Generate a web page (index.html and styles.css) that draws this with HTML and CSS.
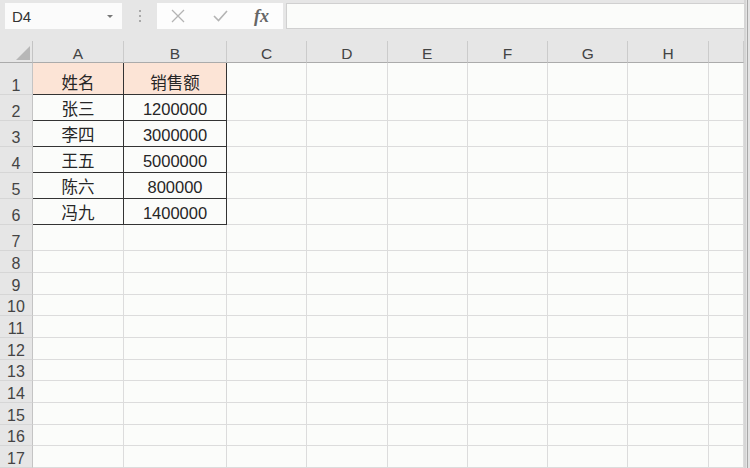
FILE: index.html
```html
<!DOCTYPE html>
<html lang="zh-CN">
<head>
    <meta charset="UTF-8">
    <meta name="viewport" content="width=device-width, initial-scale=1.0">
    <title>销售额</title>
    <link rel="stylesheet" href="styles.css">
</head>
<body>

    <div class="ecran">
        <div class="app">
            <div class="bara">
                <div class="nume">
                    <span>D4</span>
                    <span class="sageata"></span>
                </div>
                <div class="puncte"><i></i><i></i><i></i></div>
                <div class="functii">
                    <svg class="icon" width="14" height="14" viewBox="0 0 14 14">
                        <path d="M1 1 L13 13 M13 1 L1 13" stroke="#b4b4b4" stroke-width="1.3" fill="none"/>
                    </svg>
                    <svg class="icon" width="15" height="12" viewBox="0 0 15 12">
                        <path d="M1 6 L5.5 10.5 L14 1" stroke="#b4b4b4" stroke-width="1.6" fill="none"/>
                    </svg>
                    <span class="fx">fx</span>
                </div>
                <div class="formula"></div>
            </div>

            <div class="foaie">
                <div class="colt"><span class="triunghi"></span></div>
                <div class="cap">A</div>
                <div class="cap">B</div>
                <div class="cap">C</div>
                <div class="cap">D</div>
                <div class="cap">E</div>
                <div class="cap">F</div>
                <div class="cap">G</div>
                <div class="cap">H</div>
                <div class="cap"></div>

                <div class="rand">1</div>
                <div class="celula tabel titlu">姓名</div>
                <div class="celula tabel titlu">销售额</div>
                <div class="celula"></div><div class="celula"></div><div class="celula"></div><div class="celula"></div><div class="celula"></div><div class="celula"></div><div class="celula"></div>

                <div class="rand">2</div>
                <div class="celula tabel">张三</div>
                <div class="celula tabel">1200000</div>
                <div class="celula"></div><div class="celula"></div><div class="celula"></div><div class="celula"></div><div class="celula"></div><div class="celula"></div><div class="celula"></div>

                <div class="rand">3</div>
                <div class="celula tabel">李四</div>
                <div class="celula tabel">3000000</div>
                <div class="celula"></div><div class="celula"></div><div class="celula"></div><div class="celula"></div><div class="celula"></div><div class="celula"></div><div class="celula"></div>

                <div class="rand">4</div>
                <div class="celula tabel">王五</div>
                <div class="celula tabel">5000000</div>
                <div class="celula"></div><div class="celula"></div><div class="celula"></div><div class="celula"></div><div class="celula"></div><div class="celula"></div><div class="celula"></div>

                <div class="rand">5</div>
                <div class="celula tabel">陈六</div>
                <div class="celula tabel">800000</div>
                <div class="celula"></div><div class="celula"></div><div class="celula"></div><div class="celula"></div><div class="celula"></div><div class="celula"></div><div class="celula"></div>

                <div class="rand">6</div>
                <div class="celula tabel">冯九</div>
                <div class="celula tabel">1400000</div>
                <div class="celula"></div><div class="celula"></div><div class="celula"></div><div class="celula"></div><div class="celula"></div><div class="celula"></div><div class="celula"></div>

                <div class="rand">7</div>
                <div class="celula"></div><div class="celula"></div><div class="celula"></div><div class="celula"></div><div class="celula"></div><div class="celula"></div><div class="celula"></div><div class="celula"></div><div class="celula"></div>

                <div class="rand">8</div>
                <div class="celula"></div><div class="celula"></div><div class="celula"></div><div class="celula"></div><div class="celula"></div><div class="celula"></div><div class="celula"></div><div class="celula"></div><div class="celula"></div>

                <div class="rand">9</div>
                <div class="celula"></div><div class="celula"></div><div class="celula"></div><div class="celula"></div><div class="celula"></div><div class="celula"></div><div class="celula"></div><div class="celula"></div><div class="celula"></div>

                <div class="rand">10</div>
                <div class="celula"></div><div class="celula"></div><div class="celula"></div><div class="celula"></div><div class="celula"></div><div class="celula"></div><div class="celula"></div><div class="celula"></div><div class="celula"></div>

                <div class="rand">11</div>
                <div class="celula"></div><div class="celula"></div><div class="celula"></div><div class="celula"></div><div class="celula"></div><div class="celula"></div><div class="celula"></div><div class="celula"></div><div class="celula"></div>

                <div class="rand">12</div>
                <div class="celula"></div><div class="celula"></div><div class="celula"></div><div class="celula"></div><div class="celula"></div><div class="celula"></div><div class="celula"></div><div class="celula"></div><div class="celula"></div>

                <div class="rand">13</div>
                <div class="celula"></div><div class="celula"></div><div class="celula"></div><div class="celula"></div><div class="celula"></div><div class="celula"></div><div class="celula"></div><div class="celula"></div><div class="celula"></div>

                <div class="rand">14</div>
                <div class="celula"></div><div class="celula"></div><div class="celula"></div><div class="celula"></div><div class="celula"></div><div class="celula"></div><div class="celula"></div><div class="celula"></div><div class="celula"></div>

                <div class="rand">15</div>
                <div class="celula"></div><div class="celula"></div><div class="celula"></div><div class="celula"></div><div class="celula"></div><div class="celula"></div><div class="celula"></div><div class="celula"></div><div class="celula"></div>

                <div class="rand">16</div>
                <div class="celula"></div><div class="celula"></div><div class="celula"></div><div class="celula"></div><div class="celula"></div><div class="celula"></div><div class="celula"></div><div class="celula"></div><div class="celula"></div>

                <div class="rand">17</div>
                <div class="celula"></div><div class="celula"></div><div class="celula"></div><div class="celula"></div><div class="celula"></div><div class="celula"></div><div class="celula"></div><div class="celula"></div><div class="celula"></div>
            </div>
        </div>
        <div class="margine"></div>
    </div>

</body>
</html>
```

FILE: styles.css
```css
body {
    margin: 0;
    height: 468px;
    overflow: hidden;
    font-family: "Liberation Sans", "Noto Sans CJK SC", sans-serif;
    color: #262626;
    background-color: #e6e6e6;
}
.ecran {
    display: flex;
    height: 468px;
}
.app {
    flex: 1;
    display: flex;
    flex-direction: column;
    min-width: 0;
}
.margine {
    width: 6px;
    background: linear-gradient(to right, #d6d6d6 0 2px, #e4e4e4 2px 3px, #a8a8a8 3px 4px, #e4e4e4 4px);
}

/* bara de sus */
.bara {
    display: flex;
    height: 42px;
    box-sizing: border-box;
    padding: 3px 0 12px 5px;
}
.nume {
    display: flex;
    align-items: center;
    justify-content: space-between;
    width: 117px;
    box-sizing: border-box;
    padding: 1px 9px 0 7px;
    background-color: #fbfbfb;
    font-size: 15px;
    color: #333;
}
.sageata {
    width: 0;
    height: 0;
    border-left: 3px solid transparent;
    border-right: 3px solid transparent;
    border-top: 3px solid #777;
}
.puncte {
    width: 35px;
    display: flex;
    flex-direction: column;
    align-items: center;
    justify-content: center;
    gap: 3px;
}
.puncte i {
    width: 2px;
    height: 2px;
    background-color: #a9a9a9;
}
.functii {
    display: flex;
    align-items: center;
    gap: 28px;
    width: 126px;
    box-sizing: border-box;
    padding-left: 14px;
    background-color: #fdfdfd;
}
.fx {
    font-family: "Liberation Serif", serif;
    font-style: italic;
    font-weight: bold;
    font-size: 18px;
    color: #666;
    margin-left: -2px;
}
.formula {
    flex: 1;
    margin-left: 3px;
    background-color: #fbfcfa;
    border: 1px solid #d0d0d0;
    border-right: none;
}

/* foaia */
.foaie {
    display: grid;
    grid-template-columns: 33px 91px 103px repeat(6, 80.3px) 1fr;
    grid-template-rows: 22px 32px repeat(6, 26px) repeat(10, 21.7px);
    background-color: #fbfcfa;
}
.foaie > div {
    box-sizing: border-box;
    display: flex;
    align-items: flex-end;
    justify-content: center;
    line-height: 17px;
}
.colt {
    background-color: #e6e6e6;
    border-right: 1px solid #c4c4c4;
    border-bottom: 1px solid #ababab;
    justify-content: flex-end !important;
    padding: 0 2px 2px 0;
}
.triunghi {
    width: 0;
    height: 0;
    border-left: 14px solid transparent;
    border-bottom: 14px solid #b7b7b7;
}
.cap {
    background-color: #e6e6e6;
    border-right: 1px solid #cbcbcb;
    border-bottom: 1px solid #ababab;
    font-size: 15.5px;
    color: #444;
}
.rand {
    background-color: #e6e6e6;
    border-right: 1px solid #c4c4c4;
    border-bottom: 1px solid #d6d6d6;
    font-size: 16px;
    color: #444;
}
.celula {
    border-right: 1px solid #dcdcdc;
    border-bottom: 1px solid #dcdcdc;
    font-size: 16.5px;
    padding-bottom: 2px;
}
.celula.tabel {
    border-right-color: #333;
    border-bottom-color: #333;
}
.celula.titlu {
    background-color: #fce4d6;
}
```
